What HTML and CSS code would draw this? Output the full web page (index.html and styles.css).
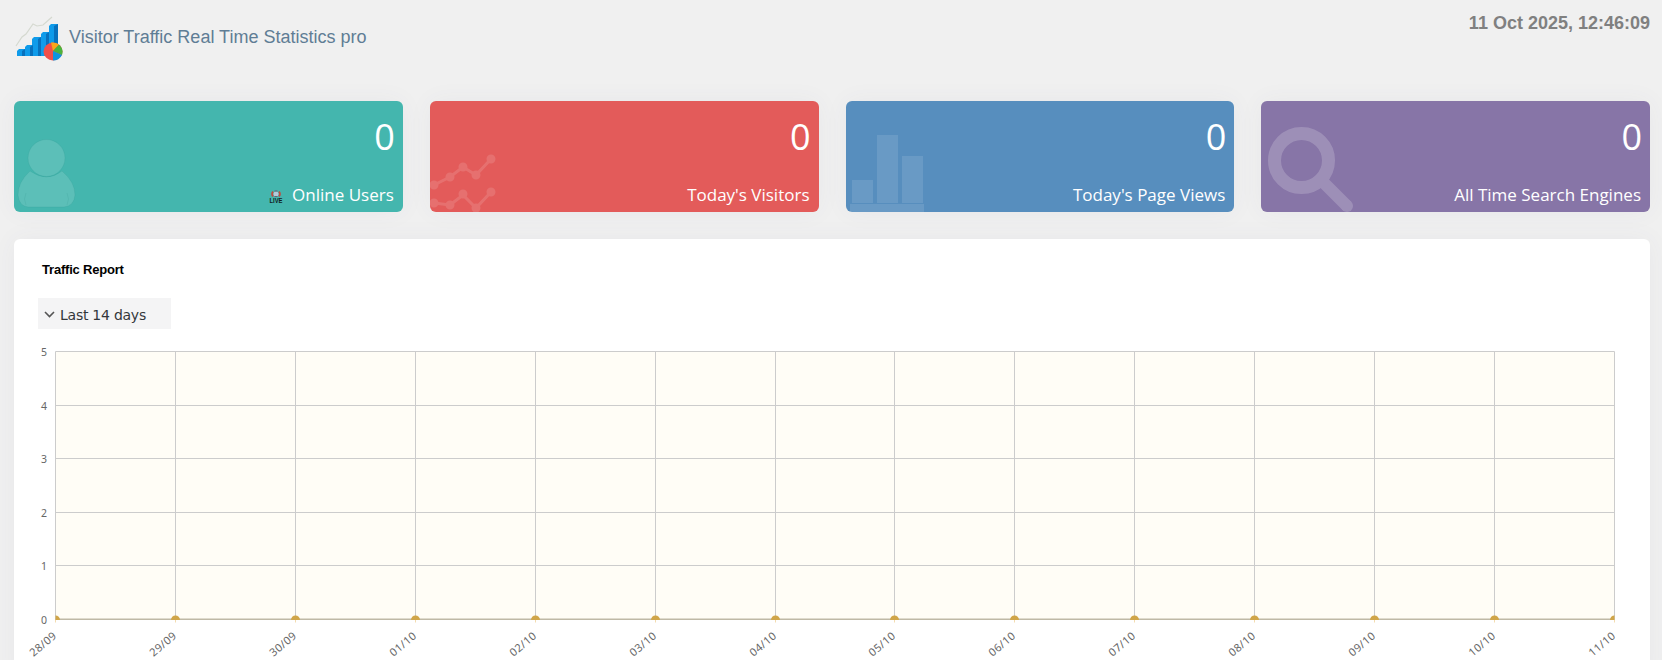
FILE: index.html
```html
<!DOCTYPE html>
<html lang="en">

<head>
   <meta charset="UTF-8">
   <meta name="viewport" content="width=device-width, initial-scale=1.0">
   <title>Visitor Traffic Real Time Statistics pro</title>
   <link rel="stylesheet" href="styles.css">
</head>

<body>
   <div class="wrapper">
      <header class="header">
         <div class="brand">
            <svg class="logo" width="48" height="46" viewBox="0 0 48 46">
               <path d="M1 30 L7 21 L11 18 L18 8 L22 10 L28 9 L37 1" fill="none" stroke="#d5d9d0" stroke-width="1.2"/>
               <path d="M2 35l2-2h6v7H2zM10 31l2-2h6v11h-8zM17 23l2-2h7v19h-9zM26 18l2-2h6v24h-8zM34 10l2-2h7v32h-9z" fill="#0f9bea"/>
               <path d="M7 35l3-2v7H7zM15 31l3-2v11h-3zM23 23l3-2v19h-3zM31 18l3-2v24h-3zM39 10l4-2v32h-4z" fill="#0871bd"/>
               <ellipse cx="38" cy="35.500" rx="9.500" ry="9" fill="#f04f4a"/>
               <path d="M38 35L36 26.500Q41 26 44 28.500z" fill="#fba71b"/>
               <path d="M38 35L44 28.500Q49 33 47 39z" fill="#4bb43c"/>
               <path d="M38 35L47 39Q44 44.500 38 44.500z" fill="#0f95df"/>
            </svg>
            <h1>Visitor Traffic Real Time Statistics pro</h1>
         </div>
         <div class="time">11 Oct 2025, 12:46:09</div>
      </header>

      <div class="cards">
         <div class="card green">
            <svg class="card-icon" width="100" height="111" viewBox="0 0 100 111">
               <g fill="#fff" fill-opacity=".13" stroke="#2b8d86" stroke-opacity=".16">
                  <path d="M16 70Q33 82 48 70Q61 81 61 94Q60 105 50 106H14Q5 105 4 94Q4 81 16 70z"/>
                  <circle cx="32.500" cy="57" r="18.500"/>
                  <path d="M12 92q-3 6 0 12M53 92q3 6 0 12" fill="none"/>
               </g>
            </svg>
            <span class="count">0</span>
            <span class="label">
               <svg class="live" width="14" height="16" viewBox="0 0 14 16">
                  <circle cx="7" cy="4" r="2.500" fill="#b5c9da"/>
                  <path d="M4 1.500Q2 4 4 6.500M10 1.500Q12 4 10 6.500" fill="none" stroke="#c04b40" stroke-width="1.700"/>
                  <path d="M5.500 1h3M5.500 6.500h3" stroke="#655e76" stroke-width="1"/>
                  <text x="0.500" y="13" textLength="13" lengthAdjust="spacingAndGlyphs">LIVE</text>
               </svg>
               Online Users
            </span>
         </div>
         <div class="card red">
            <svg class="card-icon" width="100" height="111" viewBox="0 0 100 111">
               <g opacity=".13" fill="#fff" stroke="#fff" stroke-width="3">
                  <path d="M4 84L20 76L33 66L46 74L61 58M4 102L20 104L33 94L46 107L61 91" fill="none"/>
                  <circle cx="4" cy="84" r="3"/><circle cx="20" cy="76" r="3"/>
                  <circle cx="33" cy="66" r="3"/><circle cx="46" cy="74" r="3"/>
                  <circle cx="61" cy="58" r="3"/><circle cx="4" cy="102" r="3"/>
                  <circle cx="20" cy="104" r="3"/><circle cx="33" cy="93" r="3"/>
                  <circle cx="46" cy="107" r="3"/><circle cx="61" cy="91" r="3"/>
               </g>
            </svg>
            <span class="count">0</span>
            <span class="label">Today's Visitors</span>
         </div>
         <div class="card blue">
            <svg class="card-icon" width="100" height="111" viewBox="0 0 100 111">
               <path d="M6 79h21v23H6zM31 34h21v68H31zM56 55h21v47H56zM4 103h74v8H4z" fill="#fff" opacity=".11"/>
            </svg>
            <span class="count">0</span>
            <span class="label">Today's Page Views</span>
         </div>
         <div class="card purple">
            <svg class="card-icon" width="100" height="111" viewBox="0 0 100 111">
               <g opacity=".19" fill="none" stroke="#fff">
                  <circle cx="40.500" cy="59.500" r="27" stroke-width="13"/>
                  <path d="M63 82L86 105" stroke-width="12"/>
                  <path d="M86 105h.01" stroke-width="12" stroke-linecap="round"/>
               </g>
            </svg>
            <span class="count">0</span>
            <span class="label">All Time Search Engines</span>
         </div>
      </div>

      <section class="report">
         <h2>Traffic Report</h2>
         <div class="range">
            <svg width="11" height="7" viewBox="0 0 11 7">
               <path d="M1 1L5.500 5.500L10 1" fill="none" stroke="#555" stroke-width="1.600"/>
            </svg>
            <span>Last 14 days</span>
         </div>
         <svg id="chart" class="chart" width="1620" height="321"></svg>
      </section>
   </div>
   <script>
      var chart = document.getElementById("chart");
      var days = ["28/09", "29/09", "30/09", "01/10", "02/10", "03/10", "04/10", "05/10", "06/10", "07/10", "08/10", "09/10", "10/10", "11/10"];
      var left = 41.5, top0 = 12.5, width = 1559, height = 268;
      var bottom = top0 + height;
      var out = '<clipPath id="plot"><rect x="' + left + '" y="0" width="' + width + '" height="' + (bottom + 0.5) + '"/></clipPath>';
      out += '<rect class="plot" x="' + left + '" y="' + top0 + '" width="' + width + '" height="' + height + '"/>';

      // horizontal lines and values
      for (var v = 0; v <= 5; v++) {
         var y = Math.floor(bottom - v * height / 5) + 0.5;
         if (v > 0) {
            out += '<path class="grid" d="M' + left + ' ' + y + 'H' + (left + width) + '"/>';
         }
         out += '<text class="value" x="33" y="' + (y + 4) + '">' + v + '</text>';
      }

      // vertical lines, dates
      var dots = "";
      for (var i = 0; i < days.length; i++) {
         var x = Math.floor(left + i * width / 13) + 0.5;
         out += '<path class="grid" d="M' + x + ' ' + top0 + 'V' + bottom + '"/>';
         out += '<path class="tick" d="M' + x + ' ' + bottom + 'v3"/>';
         out += '<text class="day" transform="translate(' + (x + 2) + ' ' + (bottom + 17.5) + ') rotate(-40)">' + days[i] + '</text>';
         dots += '<circle class="dot" cx="' + x + '" cy="' + (bottom + 0.5) + '" r="4.5"/>';
      }
      out += '<path class="base" d="M' + left + ' ' + (bottom - 0.25) + 'H' + (left + width) + '"/>';
      out += '<g clip-path="url(#plot)">' + dots + '</g>';
      chart.innerHTML = out;
   </script>
</body>

</html>
```

FILE: styles.css
```css
* {
   box-sizing: border-box;
}

html {
   overflow: hidden;
}

body {
   margin: 0;
   background-color: #f0f0f0;
   font-family: "Liberation Sans", Arial, sans-serif;
}

.wrapper {
   height: 660px;
   padding: 0 12px 0 14px;
   overflow: hidden;
}

.header {
   display: flex;
   justify-content: space-between;
   height: 101px;
}

.brand {
   display: flex;
   align-items: flex-start;
   gap: 6px;
   padding: 16px 0 0 1px;
}

.brand h1 {
   margin: 11px 0 0;
   color: #5f7d95;
   font-size: 18px;
   font-weight: 400;
   line-height: 21px;
}

.time {
   padding-top: 12px;
   color: #808080;
   font-size: 18px;
   font-weight: 700;
   line-height: 22px;
}

.cards {
   display: grid;
   grid-template-columns: repeat(4, 1fr);
   gap: 27px;
}

.card {
   display: flex;
   position: relative;
   flex-direction: column;
   align-items: flex-end;
   height: 111px;
   padding: 15px 9px 0 0;
   border-radius: 6px;
   box-shadow: 0 0 25px rgba(80, 80, 110, 0.05);
   color: #fff;
   font-family: "Open Sans", sans-serif;
}

.card-icon {
   position: absolute;
   bottom: 0;
   left: 0;
}

.green {
   background-color: #44b6ae;
}

.red {
   background-color: #e35b5a;
}

.blue {
   background-color: #578ebe;
}

.purple {
   background-color: #8775a7;
}

.count {
   margin-right: -1px;
   font-size: 36px;
   line-height: 42px;
}

.label {
   display: flex;
   align-items: center;
   gap: 9px;
   margin-top: 24px;
   font-size: 17px;
   line-height: 26px;
}

.live {
   margin-top: 5px;
}

.live text {
   fill: #10201f;
   font: 700 6.5px "Liberation Sans", sans-serif;
}

.report {
   height: 440px;
   margin-top: 27px;
   border-radius: 6px;
   background-color: #fff;
   box-shadow: 0 0 25px rgba(80, 80, 110, 0.05);
   overflow: hidden;
}

.report h2 {
   margin: 22px 0 0 28px;
   color: #000;
   font-size: 13px;
   letter-spacing: -0.2px;
   line-height: 18px;
}

.range {
   display: flex;
   align-items: center;
   gap: 5px;
   width: 133px;
   height: 31px;
   margin: 19px 0 0 24px;
   padding: 2px 0 0 6px;
   background-color: #f4f4f5;
   color: #33373b;
   font: 14px "DejaVu Sans", sans-serif;
   letter-spacing: -0.25px;
}

.chart {
   display: block;
   margin-top: 10px;
}

.plot {
   fill: #fffdf6;
}

.grid {
   stroke: #ccc;
   stroke-width: 1;
}

.base {
   stroke: #bfb9a6;
   stroke-width: 1.5;
}

.tick {
   stroke: #f3dcb0;
}

.dot {
   fill: #d0a548;
}

.value {
   fill: #666;
   font: 10.5px "Noto Sans", sans-serif;
   text-anchor: end;
}

.day {
   fill: #666;
   font: 11px "Noto Sans", sans-serif;
   letter-spacing: 0.4px;
   text-anchor: end;
}
```
